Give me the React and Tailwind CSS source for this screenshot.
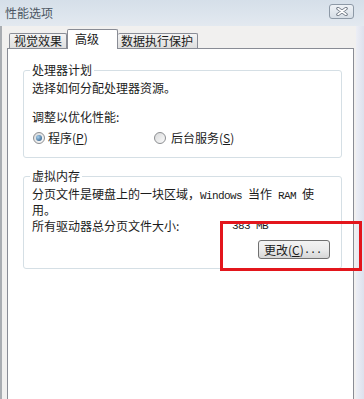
const mono = "font-['Liberation_Mono',monospace] text-[11px] tracking-[-0.6px]";

const Radio = ({ checked }) => (
  <span className="w-[12px] h-[12px] shrink-0 rounded-full border border-[#8c8e91] bg-linear-to-br from-[#d9dadb] to-[#fbfbfb] flex items-center justify-center">
    {checked && (
      <span className="w-[6px] h-[6px] rounded-full bg-[radial-gradient(circle_at_35%_35%,#a9d1ee,#214f7c)]" />
    )}
  </span>
);

const App = () => {
  return (
    <div className="relative w-[364px] h-[399px] overflow-hidden flex flex-col bg-[#f1f0ef] text-[12px] text-[#1b1b1b] font-['Noto_Sans_CJK_SC',sans-serif]">
      {/* title bar */}
      <div className="h-[26px] shrink-0 flex items-start justify-between pl-[5px] pr-[10px] bg-linear-to-b from-[#d5dfe9] to-[#e3e9f0]">
        <span className="mt-[6px] leading-[14px] text-[#4b5662]">性能选项</span>
        <button className="mt-[4px] w-[25px] h-[15px] rounded-[3px] border border-[#8d99a6] bg-linear-to-b from-[#eef2f6] to-[#d7dee6] flex items-center justify-center">
          <svg width="12" height="9" viewBox="0 0 12 9">
            <path d="M2 1.5 L10 7.5 M10 1.5 L2 7.5" stroke="#6b7480" strokeWidth="3.4" strokeLinecap="round" />
            <path d="M2 1.5 L10 7.5 M10 1.5 L2 7.5" stroke="#ffffff" strokeWidth="1.6" strokeLinecap="round" />
          </svg>
        </button>
      </div>

      <div className="flex-1 flex min-h-0">
        <div className="w-[2px] bg-[#a9adb2]" />
        <div className="flex-1 flex flex-col pl-[5px] pr-[2px] pt-[3px]">
          {/* tabs */}
          <div className="flex items-end pl-[2px] h-[19px] relative z-10">
            <div className="h-[15px] w-[58px] px-[4px] flex items-center leading-[14px] border border-b-0 border-[#898c95] rounded-t-[2px] bg-linear-to-b from-[#f4f4f4] to-[#dedede]">
              视觉效果
            </div>
            <div className="h-[20px] w-[51px] mb-[-1px] pl-[7px] pt-[2px] leading-[14px] border border-b-0 border-[#898c95] rounded-t-[2px] bg-white">
              高级
            </div>
            <div className="h-[15px] w-[80px] px-[3px] flex items-center leading-[14px] border border-b-0 border-l-0 border-[#898c95] rounded-t-[2px] bg-linear-to-b from-[#f4f4f4] to-[#dedede]">
              数据执行保护
            </div>
          </div>

          {/* panel */}
          <div className="flex-1 border border-b-0 border-[#898c95] bg-white pt-[21px] pl-[15px]">
            {/* processor scheduling */}
            <div className="w-[319px] border border-[#d5dfe5] rounded-[3px] px-[8px] pb-[12px]">
              <div className="-mt-[8px] -ml-[2px] px-[2px] w-fit bg-white leading-[14px]">处理器计划</div>
              <div className="mt-[4px] leading-[14px]">选择如何分配处理器资源。</div>
              <div className="mt-[15px] leading-[14px]">调整以优化性能:</div>
              <div className="mt-[7px] h-[14px] flex items-center">
                <div className="w-[122px] flex items-center pl-[1px]">
                  <Radio checked />
                  <span className="ml-[3px] leading-[14px]">
                    程序(<u>P</u>)
                  </span>
                </div>
                <div className="flex items-center">
                  <Radio />
                  <span className="ml-[5px] leading-[14px]">
                    后台服务(<u>S</u>)
                  </span>
                </div>
              </div>
            </div>

            {/* virtual memory */}
            <div className="mt-[18px] w-[319px] border border-[#d5dfe5] rounded-[3px] px-[8px] pb-[9px] flex flex-col">
              <div className="-mt-[8px] -ml-[2px] px-[2px] w-fit bg-white leading-[14px]">虚拟内存</div>
              <div className="mt-[4px] leading-[13px] whitespace-nowrap">
                分页文件是硬盘上的一块区域，<span className={mono}>Windows </span>当作
                <span className={mono}> RAM </span>使
                <br />
                用。
              </div>
              <div className="mt-[3px] flex items-center leading-[14px]">
                <span className="w-[200px]">所有驱动器总分页文件大小:</span>
                <span className={mono}>383 MB</span>
              </div>
              <button className="mt-[7px] mr-[3px] self-end w-[72px] h-[19px] rounded-[3px] border border-[#707070] bg-linear-to-b from-[#f3f3f3] via-[#ebebeb] to-[#d6d6d6] flex items-center pl-[5px] leading-[14px]">
                更改(<u>C</u>)<span className={mono}>...</span>
              </button>
            </div>
          </div>
        </div>
        <div className="w-[8px] bg-linear-to-r from-[#eceef5] to-[#dde1ed]" />
      </div>

      {/* highlight box */}
      <div className="absolute left-[220px] top-[221px] w-[142px] h-[50px] border-[3px] border-[#e3161c]" />
    </div>
  );
};

export default App;
